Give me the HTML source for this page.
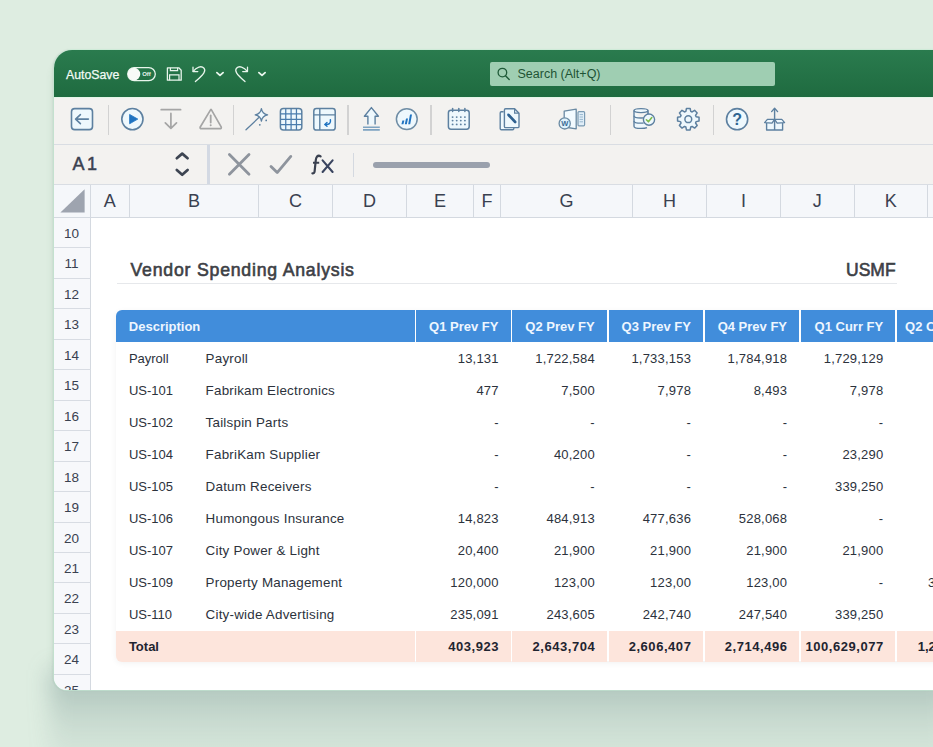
<!DOCTYPE html><html><head><meta charset="utf-8"><style>
*{box-sizing:border-box;margin:0;padding:0}
html,body{width:933px;height:747px;overflow:hidden}
body{background:#deede1;font-family:"Liberation Sans",sans-serif;position:relative}
.abs{position:absolute}
#shadow{position:absolute;left:50px;top:670px;width:900px;height:110px;background:linear-gradient(rgba(80,115,115,0.38),rgba(95,128,125,0.15) 48%,rgba(120,145,135,0.0));filter:blur(11px)}
#shadow2{position:absolute;left:54px;top:60px;width:900px;height:620px;border-radius:18px;box-shadow:0 0 10px rgba(60,110,75,0.12)}
#win{position:absolute;left:53.5px;top:50px;width:900px;height:640px;border-radius:18px 0 0 13px;overflow:hidden;background:#fff;box-shadow:0 0 0 0.8px rgba(200,240,215,0.7),-1px 0 2px rgba(90,105,110,0.22)}
#title{position:absolute;left:0;top:0;width:900px;height:47px;background:linear-gradient(#2a7b4e,#1f6b40)}
#ribbon{position:absolute;left:0;top:47px;width:900px;height:48px;background:#f3f2f0;border-bottom:1.5px solid #d9dde3}
#fbar{position:absolute;left:0;top:95px;width:900px;height:39.5px;background:#f3f2f0;border-bottom:1.5px solid #d9dde3}
#colhdr{position:absolute;left:0;top:134.5px;width:900px;height:33.5px;background:#f5f7fa;border-bottom:1.5px solid #d4d9e0}
.ch{position:absolute;top:134.5px;height:32px;border-right:1.5px solid #d4d9e0;font-size:18px;color:#3a4150;text-align:center;line-height:33px}
.rh{position:absolute;left:0;width:37.1px;background:#f7f8fb;border-bottom:1.5px solid #d8dce3;border-right:1.5px solid #d4d9e0;font-size:13.5px;color:#3a4150;text-align:center}
.sep{position:absolute;width:1.5px;background:#d2d2d2}
svg{position:absolute;overflow:visible}
.t{position:absolute;white-space:nowrap}
#tbl{position:absolute;left:62px;top:260px;width:860px;height:351px;border-radius:6px;box-shadow:0 2px 6px rgba(0,0,0,0.06)}
.th{position:absolute;top:0;height:32px;background:#418ddb;color:#eef6ff;font-weight:bold;font-size:13px;line-height:33px}
.tr{position:absolute;left:0;height:32px;width:860px;font-size:13px;color:#2c323c;line-height:34px}
.c{position:absolute;top:0;white-space:nowrap}
.num{text-align:right;letter-spacing:0.2px}
.tot.num{letter-spacing:0.55px}
.tot{background:#fde5dc;font-weight:bold;color:#1f2430}
</style></head><body>
<div id="shadow2"></div><div id="shadow"></div>
<div id="win">
<div id="title">
<div class="t" style="left:12.5px;top:16.8px;font-size:12.3px;color:#f2fbf5;-webkit-text-stroke:0.25px #f2fbf5;line-height:16px">AutoSave</div>
</div>
<svg style="left:71.5px;top:15px" width="35" height="18" viewBox="125 65 35 18" ><rect x="127.7" y="67.6" width="27.6" height="13" rx="6.5" fill="none" stroke="#e8f5ec" stroke-width="1.3"/><circle cx="134" cy="74.1" r="6.3" fill="#f7fbf8"/><text x="146.5" y="76.3" font-family="Liberation Sans" font-size="6" font-weight="bold" fill="#e8f5ec" text-anchor="middle">Off</text></svg>
<svg style="left:110.5px;top:15px" width="21" height="19" viewBox="164 65 21 19" ><path d="M167.4 67.8 H178.8 L181.2 70.2 V80.2 H167.4 Z" fill="none" stroke="#e8f5ec" stroke-width="1.3" stroke-linejoin="round"/><path d="M170.4 67.8 V70.6 H177.6 V67.8" fill="none" stroke="#e8f5ec" stroke-width="1.2"/><path d="M169.6 80.2 V74.8 H179 V80.2" fill="none" stroke="#e8f5ec" stroke-width="1.2"/></svg>
<svg style="left:135.5px;top:13px" width="19" height="21" viewBox="189 63 19 21" ><path d="M193.2 71.4 C196.5 66.8 201.5 65.4 204 68.2 C206 70.6 204.6 73.6 195.4 81.6" fill="none" stroke="#e8f5ec" stroke-width="1.3" stroke-linecap="round"/><path d="M193 67.2 V71.6 H197.8" fill="none" stroke="#e8f5ec" stroke-width="1.3" stroke-linecap="round" stroke-linejoin="round"/></svg>
<svg style="left:161.7px;top:19px" width="10.0" height="10" viewBox="215.2 69 10.0 10" ><path d="M217.1 72.6 L220.2 75.4 L223.29999999999998 72.6" fill="none" stroke="#e8f5ec" stroke-width="1.8" stroke-linecap="round" stroke-linejoin="round"/></svg>
<svg style="left:203.9px;top:19px" width="10.0" height="10" viewBox="257.4 69 10.0 10" ><path d="M259.29999999999995 72.6 L262.4 75.4 L265.5 72.6" fill="none" stroke="#e8f5ec" stroke-width="1.8" stroke-linecap="round" stroke-linejoin="round"/></svg>
<svg style="left:178.5px;top:13px" width="19" height="21" viewBox="232 63 19 21" ><path d="M247.3 71.4 C244 66.8 239 65.4 236.5 68.2 C234.5 70.6 235.9 73.6 245 81.6" fill="none" stroke="#e8f5ec" stroke-width="1.3" stroke-linecap="round"/><path d="M247.5 67.2 V71.6 H242.7" fill="none" stroke="#e8f5ec" stroke-width="1.3" stroke-linecap="round" stroke-linejoin="round"/></svg>
<div class="abs" style="left:436.5px;top:12px;width:285px;height:24px;border-radius:2px;background:#9fceb2"></div>
<svg style="left:441.5px;top:16px" width="17" height="18" viewBox="495 66 17 18" ><circle cx="502.4" cy="72.6" r="4.3" fill="none" stroke="#1f5a38" stroke-width="1.3"/><path d="M505.5 75.8 L509.2 79.6" stroke="#1f5a38" stroke-width="1.4" stroke-linecap="round"/></svg>
<div class="t" style="left:464.0px;top:16px;font-size:12.5px;color:#1e5435;line-height:16px">Search (Alt+Q)</div>
<div id="ribbon"></div>
<div class="abs" style="left:0;top:47px;width:900px;height:1px;background:#e4f5e8"></div>
<div class="sep" style="left:54.25px;top:54.5px;height:30px"></div>
<div class="sep" style="left:179.25px;top:54.5px;height:30px"></div>
<div class="sep" style="left:293.75px;top:54.5px;height:30px"></div>
<div class="sep" style="left:376.75px;top:54.5px;height:30px"></div>
<div class="sep" style="left:556.25px;top:54.5px;height:30px"></div>
<div class="sep" style="left:659.25px;top:54.5px;height:30px"></div>
<svg style="left:14.5px;top:55px" width="28" height="28" viewBox="68 105 28 28" ><rect x="71.5" y="108.6" width="21" height="21" rx="3.2" fill="#eef8fd" stroke="#5d80a0" stroke-width="1.6"/><path d="M75.6 119.1 H88.4 M80.4 114.6 L75.6 119.1 L80.4 123.6" fill="none" stroke="#5d80a0" stroke-width="1.6" stroke-linecap="round" stroke-linejoin="round"/></svg>
<svg style="left:64.5px;top:55px" width="29" height="29" viewBox="118 105 29 29" ><circle cx="132.4" cy="119.1" r="10.6" fill="#eef8fd" stroke="#5d80a0" stroke-width="1.6"/><path d="M129.6 114.4 L137.8 119.1 L129.6 123.8 Z" fill="#1f73c1" stroke="#1f73c1" stroke-width="0.8" stroke-linejoin="round"/></svg>
<svg style="left:104.5px;top:56px" width="26" height="26" viewBox="158 106 26 26" ><path d="M161.2 109.7 H180.6" stroke="#a5a5a5" stroke-width="1.7" stroke-linecap="round"/><path d="M170.9 113.4 V128.2 M165.3 122.8 L170.9 128.4 L176.5 122.8" fill="none" stroke="#a5a5a5" stroke-width="1.7" stroke-linecap="round" stroke-linejoin="round"/></svg>
<svg style="left:143.5px;top:56px" width="28" height="26" viewBox="197 106 28 26" ><path d="M210.7 109.6 Q211 109.3 211.3 109.6 L221.3 127.2 Q221.4 128.7 220 128.7 H201.4 Q200 128.7 200.1 127.2 Z" fill="#f3f2f0" stroke="#a5a5a5" stroke-width="1.7" stroke-linejoin="round"/><path d="M210.7 115.4 V122.6" stroke="#a5a5a5" stroke-width="1.8" stroke-linecap="round"/><circle cx="210.7" cy="125.2" r="1" fill="#a5a5a5"/></svg>
<svg style="left:189.5px;top:55px" width="28" height="28" viewBox="243 105 28 28" ><path d="M246 129.8 L258.6 117.8" stroke="#5d80a0" stroke-width="1.3" stroke-linecap="round"/><path d="M261.4 108.6 Q262.2 113.8 267.6 114.9 Q262.2 116 261.4 121.2 Q260.6 116 255.2 114.9 Q260.6 113.8 261.4 108.6 Z" fill="#eef8fd" stroke="#5d80a0" stroke-width="1.3" stroke-linejoin="round"/><circle cx="266.2" cy="120.4" r="0.9" fill="#5d80a0"/><circle cx="259.8" cy="124.8" r="0.9" fill="#5d80a0"/></svg>
<svg style="left:224.5px;top:56px" width="26" height="26" viewBox="278 106 26 26" ><rect x="280.4" y="108.6" width="21.4" height="21.4" rx="3" fill="#eef8fd" stroke="#5d80a0" stroke-width="1.5"/><path d="M285.75 108.6 V130 M280.4 113.95 H301.8" stroke="#4a7cad" stroke-width="1.25"/><path d="M291.10 108.6 V130 M280.4 119.30 H301.8" stroke="#4a7cad" stroke-width="1.25"/><path d="M296.45 108.6 V130 M280.4 124.65 H301.8" stroke="#4a7cad" stroke-width="1.25"/></svg>
<svg style="left:257.5px;top:56px" width="27" height="26" viewBox="311 106 27 26" ><rect x="313.8" y="108.6" width="21.4" height="21.4" rx="2.6" fill="#eef8fd" stroke="#5d80a0" stroke-width="1.5"/><path d="M319.8 108.6 V130 M313.8 114.9 H335.2" stroke="#5d80a0" stroke-width="1.4"/><path d="M330.4 119.8 C331 123.6 329 124.6 325.2 124.4" fill="none" stroke="#1f73c1" stroke-width="1.5" stroke-linecap="round"/><path d="M327 122.4 L324.8 124.4 L327 126.2" fill="none" stroke="#1f73c1" stroke-width="1.4" stroke-linecap="round" stroke-linejoin="round"/></svg>
<svg style="left:306.5px;top:55px" width="23" height="28" viewBox="360 105 23 28" ><path d="M367.9 124.5 V116.3 H364.4 L371.4 107.6 L378.4 116.3 H375.1 V124.5" fill="#eef8fd" stroke="#5d80a0" stroke-width="1.4" stroke-linejoin="round"/><path d="M363 127.2 H379.8 M363 129.9 H379.8" stroke="#7ea3c1" stroke-width="1.6"/></svg>
<svg style="left:339.5px;top:56px" width="27" height="26" viewBox="393 106 27 26" ><circle cx="406.8" cy="119.1" r="10.4" fill="#eef8fd" stroke="#6f8da5" stroke-width="1.5"/><path d="M401.4 124.2 L402.4 120.6 H404.4 L403.4 124.2 Z M404.8 124.2 L406 118.4 H408 L406.8 124.2 Z M408.2 124.2 L410 114.6 H412 L410.2 124.2 Z" fill="#1f73c1"/></svg>
<svg style="left:391.5px;top:56px" width="27" height="26" viewBox="445 106 27 26" ><rect x="448.4" y="110.2" width="20.8" height="19" rx="2.6" fill="#eef8fd" stroke="#5d80a0" stroke-width="1.5"/><path d="M452.6 108.6 V111.4" stroke="#5d80a0" stroke-width="1.5" stroke-linecap="round"/><path d="M458.8 108.6 V111.4" stroke="#5d80a0" stroke-width="1.5" stroke-linecap="round"/><path d="M464.9 108.6 V111.4" stroke="#5d80a0" stroke-width="1.5" stroke-linecap="round"/><circle cx="452.6" cy="117.1" r="0.95" fill="#5d80a0"/><circle cx="456.7" cy="117.1" r="0.95" fill="#5d80a0"/><circle cx="460.8" cy="117.1" r="0.95" fill="#5d80a0"/><circle cx="464.9" cy="117.1" r="0.95" fill="#5d80a0"/><circle cx="452.6" cy="120.6" r="0.95" fill="#5d80a0"/><circle cx="456.7" cy="120.6" r="0.95" fill="#5d80a0"/><circle cx="460.8" cy="120.6" r="0.95" fill="#5d80a0"/><circle cx="464.9" cy="120.6" r="0.95" fill="#5d80a0"/><circle cx="452.6" cy="124.4" r="0.95" fill="#5d80a0"/><circle cx="456.7" cy="124.4" r="0.95" fill="#5d80a0"/><circle cx="460.8" cy="124.4" r="0.95" fill="#5d80a0"/><circle cx="464.9" cy="124.4" r="0.95" fill="#5d80a0"/></svg>
<svg style="left:443.5px;top:56px" width="26" height="27" viewBox="497 106 26 27" ><path d="M503.6 111.8 H501.4 Q500.2 111.8 500.2 113 V128.6 Q500.2 129.8 501.4 129.8 H512.6 Q513.8 129.8 513.8 128.6 V127.6" fill="#eef8fd" stroke="#5d80a0" stroke-width="1.4"/><path d="M505.6 108.8 H514.6 L519 113.2 V126.4 Q519 127.6 517.8 127.6 H505.6 Q504.4 127.6 504.4 126.4 V110 Q504.4 108.8 505.6 108.8 Z" fill="#eef8fd" stroke="#5d80a0" stroke-width="1.4" stroke-linejoin="round"/><path d="M514.6 108.8 V113.2 H519" fill="none" stroke="#5d80a0" stroke-width="1.2"/><path d="M508.6 115 L515.2 122" stroke="#2f6190" stroke-width="2.6" stroke-linecap="round"/><path d="M507.4 113.8 L508 114.4" stroke="#1f73c1" stroke-width="1.2"/></svg>
<svg style="left:502.5px;top:56px" width="32" height="26" viewBox="556 106 32 26" ><path d="M564.2 111.2 L576.2 109.2 V128.8 L564.2 127 Z" fill="#f3fbff" stroke="#6a8aa3" stroke-width="1.3" stroke-linejoin="round"/><rect x="578" y="111.6" width="6.6" height="14.2" rx="1" fill="#e0eef8" stroke="#7a9bb3" stroke-width="1.2"/><path d="M579.6 114.6 H583 M579.6 117 H583 M579.6 119.4 H583 M579.6 121.8 H583" stroke="#8fb0c8" stroke-width="0.9"/><circle cx="564.7" cy="123.4" r="5.6" fill="#dff2fc" stroke="#6a8aa3" stroke-width="1.3"/><text x="564.7" y="126.2" font-family="Liberation Sans" font-size="7.5" font-weight="bold" fill="#3a6b95" text-anchor="middle">W</text></svg>
<svg style="left:577.5px;top:56px" width="27" height="26" viewBox="631 106 27 26" ><path d="M634 110.6 V126.2 Q634 128.4 641 128.4 Q645 128.4 647 127.6 M648 112.4 V113.6" fill="#eef8fd" stroke="#5d80a0" stroke-width="1.4"/><ellipse cx="641" cy="110.6" rx="7" ry="2" fill="#eef8fd" stroke="#5d80a0" stroke-width="1.4"/><path d="M634 115.8 Q634 118 641 118 Q645 118 646.8 117.4 M634 121 Q634 123.2 641 123.2 Q642.5 123.2 643.6 123" fill="none" stroke="#5d80a0" stroke-width="1.3"/><path d="M648 110.6 V114.2" stroke="#5d80a0" stroke-width="1.4"/><circle cx="649" cy="119.6" r="5.6" fill="#eef8fd" stroke="#5d80a0" stroke-width="1.4"/><path d="M646.4 119.8 L648.4 121.8 L651.8 117.6" fill="none" stroke="#7dbb4c" stroke-width="1.6" stroke-linecap="round" stroke-linejoin="round"/></svg>
<svg style="left:621.5px;top:56px" width="27" height="26" viewBox="675 106 27 26" ><path d="M685.88 111.37 L686.46 108.46 L690.14 108.46 L690.72 111.37 L692.13 111.95 L694.59 110.30 L697.20 112.91 L695.55 115.37 L696.13 116.78 L699.04 117.36 L699.04 121.04 L696.13 121.62 L695.55 123.03 L697.20 125.49 L694.59 128.10 L692.13 126.45 L690.72 127.03 L690.14 129.94 L686.46 129.94 L685.88 127.03 L684.47 126.45 L682.01 128.10 L679.40 125.49 L681.05 123.03 L680.47 121.62 L677.56 121.04 L677.56 117.36 L680.47 116.78 L681.05 115.37 L679.40 112.91 L682.01 110.30 L684.47 111.95 Z" fill="#eef8fd" stroke="#5d80a0" stroke-width="1.5" stroke-linejoin="round"/><circle cx="688.3" cy="119.2" r="3.4" fill="#eef8fd" stroke="#5d80a0" stroke-width="1.5"/></svg>
<svg style="left:669.5px;top:56px" width="28" height="27" viewBox="723 106 28 27" ><circle cx="737.1" cy="119.2" r="10.6" fill="#eef8fd" stroke="#5d80a0" stroke-width="1.6"/><text x="737.1" y="125.4" font-family="Liberation Sans" font-size="16" font-weight="bold" fill="#2f6591" text-anchor="middle">?</text></svg>
<svg style="left:708.5px;top:55px" width="26" height="28" viewBox="762 105 26 28" ><path d="M766.6 122.8 V130 H782.6 V122.8" fill="#eef8fd" stroke="#5d80a0" stroke-width="1.4" stroke-linejoin="round"/><path d="M764.6 122.6 L767.4 119.4 H774.6 L772 123.2 Z M784.6 122.6 L781.8 119.4 H774.6 L777.2 123.2 Z" fill="#eef8fd" stroke="#5d80a0" stroke-width="1.3" stroke-linejoin="round"/><path d="M774.6 109 V130" stroke="#5d80a0" stroke-width="1.4"/><path d="M771.6 111.6 L774.6 108.2 L777.6 111.6" fill="none" stroke="#5d80a0" stroke-width="1.4" stroke-linecap="round" stroke-linejoin="round"/></svg>
<div id="fbar"></div>
<div class="t" style="left:19.0px;top:102.5px;font-size:18px;color:#3a4150;letter-spacing:2.5px;line-height:22px;-webkit-text-stroke:0.5px #3a4150">A1</div>
<svg style="left:118.5px;top:100px" width="20" height="30" viewBox="172 150 20 30" ><path d="M176.8 158.2 L182.2 153.6 L187.6 158.2 M176.8 170 L182.2 174.8 L187.6 170" fill="none" stroke="#3d4552" stroke-width="2.7" stroke-linecap="round" stroke-linejoin="round"/></svg>
<div class="abs" style="left:153.6px;top:95px;width:2.8px;height:39px;background:#d3d9e3"></div>
<svg style="left:171.5px;top:100px" width="29" height="28" viewBox="225 150 29 28" ><path d="M229.4 154.6 L249 174.2 M249 154.6 L229.4 174.2" stroke="#8e949d" stroke-width="2.8" stroke-linecap="round"/></svg>
<svg style="left:213.5px;top:101px" width="28" height="26" viewBox="267 151 28 26" ><path d="M271 166.4 L277.2 172.6 L290.8 156.4" fill="none" stroke="#8e949d" stroke-width="2.8" stroke-linecap="round" stroke-linejoin="round"/></svg>
<svg style="left:254.5px;top:102px" width="30" height="25" viewBox="308 152 30 25" ><path d="M320.6 156.4 Q318.6 155 317 156.6 Q316 157.8 315.8 160 L314.6 171.4 Q314.4 173.6 312.4 173.4" fill="none" stroke="#3a4150" stroke-width="2.2" stroke-linecap="round"/><path d="M313 162.8 H319.2" stroke="#3a4150" stroke-width="2"/><path d="M322.6 160.4 L332.6 172 M332.6 160.4 L322.6 172" stroke="#3a4560" stroke-width="2.1" stroke-linecap="round"/></svg>
<div class="abs" style="left:299.5px;top:102.5px;width:1.3px;height:24px;background:#d4d9e0"></div>
<div class="abs" style="left:319.0px;top:111.8px;width:117px;height:6px;border-radius:3px;background:#9aa1ad"></div>
<div id="colhdr"></div>
<div class="ch" style="left:0;width:37.0px"></div>
<div class="ch" style="left:37.0px;width:39.5px">A</div>
<div class="ch" style="left:76.5px;width:129px">B</div>
<div class="ch" style="left:205.5px;width:74px">C</div>
<div class="ch" style="left:279.5px;width:74px">D</div>
<div class="ch" style="left:353.5px;width:67px">E</div>
<div class="ch" style="left:420.5px;width:27px">F</div>
<div class="ch" style="left:447.5px;width:132px">G</div>
<div class="ch" style="left:579.5px;width:74px">H</div>
<div class="ch" style="left:653.5px;width:74px">I</div>
<div class="ch" style="left:727.5px;width:73.5px">J</div>
<div class="ch" style="left:801.0px;width:73.5px">K</div>
<div class="ch" style="left:874.5px;width:72px">L</div>
<svg style="left:4.5px;top:137px" width="30" height="28" viewBox="58 187 30 28" ><path d="M84.6 189.2 V212.6 H60.4 Z" fill="#9ea4af"/></svg>
<div class="rh" style="top:168.00px;height:30.46px;line-height:32.45px">10</div>
<div class="rh" style="top:198.45px;height:30.46px;line-height:32.45px">11</div>
<div class="rh" style="top:228.90px;height:30.46px;line-height:32.45px">12</div>
<div class="rh" style="top:259.35px;height:30.46px;line-height:32.45px">13</div>
<div class="rh" style="top:289.80px;height:30.46px;line-height:32.45px">14</div>
<div class="rh" style="top:320.25px;height:30.46px;line-height:32.45px">15</div>
<div class="rh" style="top:350.70px;height:30.46px;line-height:32.45px">16</div>
<div class="rh" style="top:381.15px;height:30.46px;line-height:32.45px">17</div>
<div class="rh" style="top:411.60px;height:30.46px;line-height:32.45px">18</div>
<div class="rh" style="top:442.05px;height:30.46px;line-height:32.45px">19</div>
<div class="rh" style="top:472.50px;height:30.46px;line-height:32.45px">20</div>
<div class="rh" style="top:502.95px;height:30.46px;line-height:32.45px">21</div>
<div class="rh" style="top:533.40px;height:30.46px;line-height:32.45px">22</div>
<div class="rh" style="top:563.85px;height:30.46px;line-height:32.45px">23</div>
<div class="rh" style="top:594.30px;height:30.46px;line-height:32.45px">24</div>
<div class="rh" style="top:624.75px;height:30.46px;line-height:32.45px">25</div>
<div class="t" style="left:77.0px;top:209px;font-size:17.7px;letter-spacing:0.78px;-webkit-text-stroke:0.6px #3d4045;color:#3d4045;line-height:22px">Vendor Spending Analysis</div>
<div class="t" style="left:792.5px;top:208.5px;font-size:17.5px;-webkit-text-stroke:0.6px #3d4045;color:#3d4045;line-height:22px">USMF</div>
<div class="abs" style="left:63.5px;top:233px;width:780px;height:1.2px;background:#e6e8eb"></div>
<div id="tbl"><div class="th" style="left:0;width:299.10px;border-top-left-radius:6px;padding-left:13.3px">Description</div><div class="th" style="left:300.7px;width:94.60px;text-align:right;padding-right:12.3px">Q1 Prev FY</div><div class="th" style="left:396.9px;width:94.60px;text-align:right;padding-right:12.3px">Q2 Prev FY</div><div class="th" style="left:493.1px;width:94.60px;text-align:right;padding-right:12.3px">Q3 Prev FY</div><div class="th" style="left:589.3px;width:94.50px;text-align:right;padding-right:12.3px">Q4 Prev FY</div><div class="th" style="left:685.4px;width:94.60px;text-align:right;padding-right:12.3px">Q1 Curr FY</div><div class="th" style="left:781.6px;width:88.90px;text-align:right;padding-right:12.3px">Q2 Curr FY</div><div class="tr" style="top:32px"><div class="c" style="left:13.4px;font-size:13px">Payroll</div><div class="c" style="left:90.1px;font-size:13.4px;letter-spacing:0.22px">Payroll</div><div class="c num" style="left:195.3px;width:187.9px">13,131</div><div class="c num" style="left:291.5px;width:187.9px">1,722,584</div><div class="c num" style="left:387.7px;width:187.9px">1,733,153</div><div class="c num" style="left:483.8px;width:187.9px">1,784,918</div><div class="c num" style="left:580.0px;width:187.9px">1,729,129</div><div class="c" style="left:812.5px"></div></div><div class="tr" style="top:64px"><div class="c" style="left:13.4px;font-size:13px">US-101</div><div class="c" style="left:90.1px;font-size:13.4px;letter-spacing:0.22px">Fabrikam Electronics</div><div class="c num" style="left:195.3px;width:187.9px">477</div><div class="c num" style="left:291.5px;width:187.9px">7,500</div><div class="c num" style="left:387.7px;width:187.9px">7,978</div><div class="c num" style="left:483.8px;width:187.9px">8,493</div><div class="c num" style="left:580.0px;width:187.9px">7,978</div><div class="c" style="left:812.5px"></div></div><div class="tr" style="top:96px"><div class="c" style="left:13.4px;font-size:13px">US-102</div><div class="c" style="left:90.1px;font-size:13.4px;letter-spacing:0.22px">Tailspin Parts</div><div class="c num" style="left:195.3px;width:187.9px">-</div><div class="c num" style="left:291.5px;width:187.9px">-</div><div class="c num" style="left:387.7px;width:187.9px">-</div><div class="c num" style="left:483.8px;width:187.9px">-</div><div class="c num" style="left:580.0px;width:187.9px">-</div><div class="c" style="left:812.5px"></div></div><div class="tr" style="top:128px"><div class="c" style="left:13.4px;font-size:13px">US-104</div><div class="c" style="left:90.1px;font-size:13.4px;letter-spacing:0.22px">FabriKam Supplier</div><div class="c num" style="left:195.3px;width:187.9px">-</div><div class="c num" style="left:291.5px;width:187.9px">40,200</div><div class="c num" style="left:387.7px;width:187.9px">-</div><div class="c num" style="left:483.8px;width:187.9px">-</div><div class="c num" style="left:580.0px;width:187.9px">23,290</div><div class="c" style="left:812.5px"></div></div><div class="tr" style="top:160px"><div class="c" style="left:13.4px;font-size:13px">US-105</div><div class="c" style="left:90.1px;font-size:13.4px;letter-spacing:0.22px">Datum Receivers</div><div class="c num" style="left:195.3px;width:187.9px">-</div><div class="c num" style="left:291.5px;width:187.9px">-</div><div class="c num" style="left:387.7px;width:187.9px">-</div><div class="c num" style="left:483.8px;width:187.9px">-</div><div class="c num" style="left:580.0px;width:187.9px">339,250</div><div class="c" style="left:812.5px"></div></div><div class="tr" style="top:192px"><div class="c" style="left:13.4px;font-size:13px">US-106</div><div class="c" style="left:90.1px;font-size:13.4px;letter-spacing:0.22px">Humongous Insurance</div><div class="c num" style="left:195.3px;width:187.9px">14,823</div><div class="c num" style="left:291.5px;width:187.9px">484,913</div><div class="c num" style="left:387.7px;width:187.9px">477,636</div><div class="c num" style="left:483.8px;width:187.9px">528,068</div><div class="c num" style="left:580.0px;width:187.9px">-</div><div class="c" style="left:812.5px"></div></div><div class="tr" style="top:224px"><div class="c" style="left:13.4px;font-size:13px">US-107</div><div class="c" style="left:90.1px;font-size:13.4px;letter-spacing:0.22px">City Power &amp; Light</div><div class="c num" style="left:195.3px;width:187.9px">20,400</div><div class="c num" style="left:291.5px;width:187.9px">21,900</div><div class="c num" style="left:387.7px;width:187.9px">21,900</div><div class="c num" style="left:483.8px;width:187.9px">21,900</div><div class="c num" style="left:580.0px;width:187.9px">21,900</div><div class="c" style="left:812.5px"></div></div><div class="tr" style="top:256px"><div class="c" style="left:13.4px;font-size:13px">US-109</div><div class="c" style="left:90.1px;font-size:13.4px;letter-spacing:0.22px">Property Management</div><div class="c num" style="left:195.3px;width:187.9px">120,000</div><div class="c num" style="left:291.5px;width:187.9px">123,00</div><div class="c num" style="left:387.7px;width:187.9px">123,00</div><div class="c num" style="left:483.8px;width:187.9px">123,00</div><div class="c num" style="left:580.0px;width:187.9px">-</div><div class="c" style="left:812.5px">3</div></div><div class="tr" style="top:288px"><div class="c" style="left:13.4px;font-size:13px">US-110</div><div class="c" style="left:90.1px;font-size:13.4px;letter-spacing:0.22px">City-wide Advertising</div><div class="c num" style="left:195.3px;width:187.9px">235,091</div><div class="c num" style="left:291.5px;width:187.9px">243,605</div><div class="c num" style="left:387.7px;width:187.9px">242,740</div><div class="c num" style="left:483.8px;width:187.9px">247,540</div><div class="c num" style="left:580.0px;width:187.9px">339,250</div><div class="c" style="left:812.5px"></div></div><div class="tr" style="top:320.8px;height:31px;line-height:32.7px"><div class="c tot" style="left:0;top:0;height:31px;width:299.10px;border-bottom-left-radius:6px;padding-left:13.4px">Total</div><div class="c tot num" style="left:300.7px;height:31px;width:94.60px;padding-right:11.75px">403,923</div><div class="c tot num" style="left:396.9px;height:31px;width:94.60px;padding-right:11.75px">2,643,704</div><div class="c tot num" style="left:493.1px;height:31px;width:94.60px;padding-right:11.75px">2,606,407</div><div class="c tot num" style="left:589.3px;height:31px;width:94.50px;padding-right:11.75px">2,714,496</div><div class="c tot num" style="left:685.4px;height:31px;width:94.60px;padding-right:11.75px">100,629,077</div><div class="c tot" style="left:781.6px;height:31px;width:88.90px;padding-left:20.6px">1,2</div></div></div>
</div>
</body></html>
